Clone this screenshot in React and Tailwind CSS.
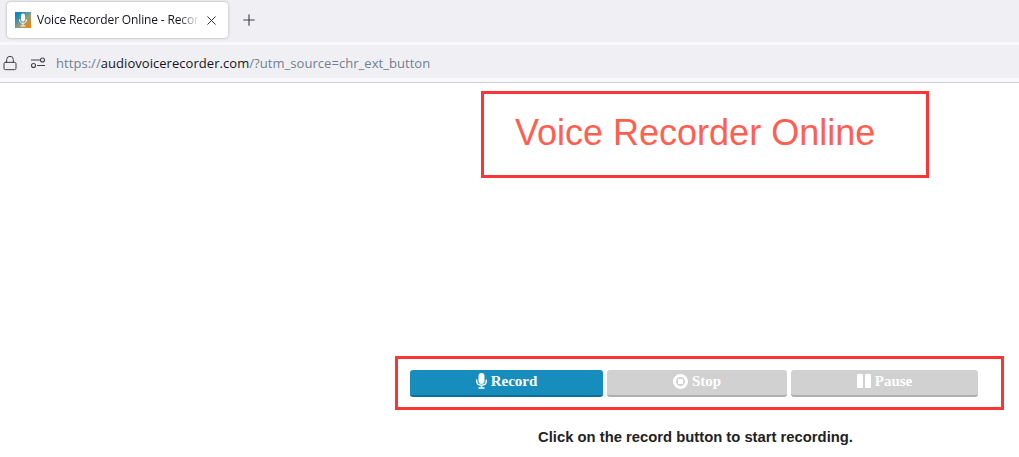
import React from 'react';
import { Lock, Plus, X } from 'lucide-react';

const TabIcon = () => (
  <svg width="16" height="16" viewBox="0 0 16 16" className="shrink-0">
    <defs>
      <linearGradient id="favicon" x1="0" y1="0" x2="1" y2="1">
        <stop offset="0.15" stopColor="#0f86c0" />
        <stop offset="0.55" stopColor="#8a9f88" />
        <stop offset="0.9" stopColor="#f08510" />
      </linearGradient>
    </defs>
    <rect width="16" height="16" fill="url(#favicon)" />
    <rect x="6" y="1.5" width="4" height="8" rx="2" fill="#fff" />
    <path d="M4.5 7.5c0 2.5 1.5 3.8 3.5 3.8s3.5-1.3 3.5-3.8M8 11.3v2.2M5.5 14h5" fill="none" stroke="#fff" strokeWidth="1" />
  </svg>
);

const SiteSettingsIcon = () => (
  <svg width="16" height="16" viewBox="0 0 16 16" fill="none" stroke="#3f3f46" strokeWidth="1.1" className="shrink-0">
    <path d="M1 5h9M7 10.5h8" />
    <circle cx="12.5" cy="5" r="2" />
    <circle cx="3.5" cy="10.5" r="2" />
  </svg>
);

const MicIcon = () => (
  <svg width="11" height="16" viewBox="0 0 11 16" fill="none" className="shrink-0 -mt-[1px]">
    <rect x="2.5" y="0" width="6" height="11" rx="3" fill="#fff" />
    <path d="M0.7 6.5v1.5c0 2.6 2 4.2 4.8 4.2s4.8-1.6 4.8-4.2V6.5M5.5 12.2v2.3M2.5 15h6" stroke="#fff" strokeWidth="1.4" />
  </svg>
);

const StopIcon = () => (
  <svg width="15" height="15" viewBox="0 0 15 15" className="shrink-0 -mt-[1px]">
    <circle cx="7.5" cy="7.5" r="6" fill="none" stroke="#fff" strokeWidth="3" />
    <rect x="5" y="5" width="5" height="5" fill="#fff" />
  </svg>
);

const PauseIcon = () => (
  <svg width="14" height="14" viewBox="0 0 14 14" className="shrink-0 -mt-[1px]">
    <rect x="0" y="0" width="6" height="14" rx="1" fill="#fff" />
    <rect x="8" y="0" width="6" height="14" rx="1" fill="#fff" />
  </svg>
);

const RecorderButton = ({ icon, label, width, active }) => (
  <button
    className={`${width} h-[27px] flex items-center justify-center gap-[4px] pb-[2px] rounded-[3px] border-b-2 text-white text-[15px] font-bold ${
      active ? 'bg-[#168dbd] border-[#0f6f97]' : 'bg-[#d1d1d1] border-[#b0b0b0]'
    }`}
    style={{ fontFamily: '"Liberation Serif", serif' }}
  >
    {icon}
    {label}
  </button>
);

const App = () => {
  return (
    <div className="w-[1019px] h-[457px] overflow-hidden bg-white" style={{ fontFamily: '"Liberation Sans", sans-serif' }}>
      {/* browser chrome */}
      <div className="h-[42px] bg-[#f0f0f4] pt-[2px] pl-[7px] flex items-start">
        <div className="w-[221px] h-[36px] bg-white rounded-[4px] shadow-[0_0_3px_rgba(0,0,0,0.3)] flex items-center pl-2 pr-[9px]">
          <TabIcon />
          <span
            className="ml-[6px] w-[162px] overflow-hidden whitespace-nowrap text-[12px] tracking-[-0.15px] text-[#15141a] [mask-image:linear-gradient(to_right,black_88%,transparent)]"
            style={{ fontFamily: '"Open Sans", sans-serif' }}
          >
            Voice Recorder Online - Recording
          </span>
          <X size={15} strokeWidth={1.5} className="ml-auto text-[#2b2a33]" />
        </div>
        <Plus size={18} strokeWidth={1.5} className="ml-[12px] mt-[9px] text-[#3f3f46]" />
      </div>
      <div className="h-[41px] bg-[#f9f9fb] border-b border-[#cfcfd4] pt-[3px]">
        <div
          className="h-[33px] bg-[#f0f0f4] flex items-center pl-[2px] pt-[3px] text-[13px] text-[#70808f]"
          style={{ fontFamily: '"Open Sans", sans-serif' }}
        >
          <Lock size={16} strokeWidth={1.5} className="text-[#3f3f46]" />
          <span className="ml-[12px]">
            <SiteSettingsIcon />
          </span>
          <span className="ml-[10px] pt-[2px] tracking-[0.05px] whitespace-nowrap">
            https://<span className="text-[#15141a]">audiovoicerecorder.com</span>/?utm_source=chr_ext_button
          </span>
        </div>
      </div>

      {/* page */}
      <div className="pt-[8px] flex flex-col">
        <div className="ml-[481px] w-[448px] h-[87px] border-[3px] border-[#fb3535] flex items-center pl-[31px] pb-[3px]">
          <h1 className="text-[36px] leading-none text-[#ff5f50] whitespace-nowrap">Voice Recorder Online</h1>
        </div>
        <div className="mt-[178px] ml-[395px] w-[609px] h-[54px] border-[3px] border-[#fb3535] flex items-start gap-1 pl-[12px] pt-[11px]">
          <RecorderButton icon={<MicIcon />} label="Record" width="w-[193px]" active />
          <RecorderButton icon={<StopIcon />} label="Stop" width="w-[180px]" />
          <RecorderButton icon={<PauseIcon />} label="Pause" width="w-[187px]" />
        </div>
        <p className="mt-[19px] ml-[395px] w-[601px] text-center text-[14.8px] font-bold leading-[16px] text-[#222]">
          Click on the record button to start recording.
        </p>
      </div>
    </div>
  );
};

export default App;
